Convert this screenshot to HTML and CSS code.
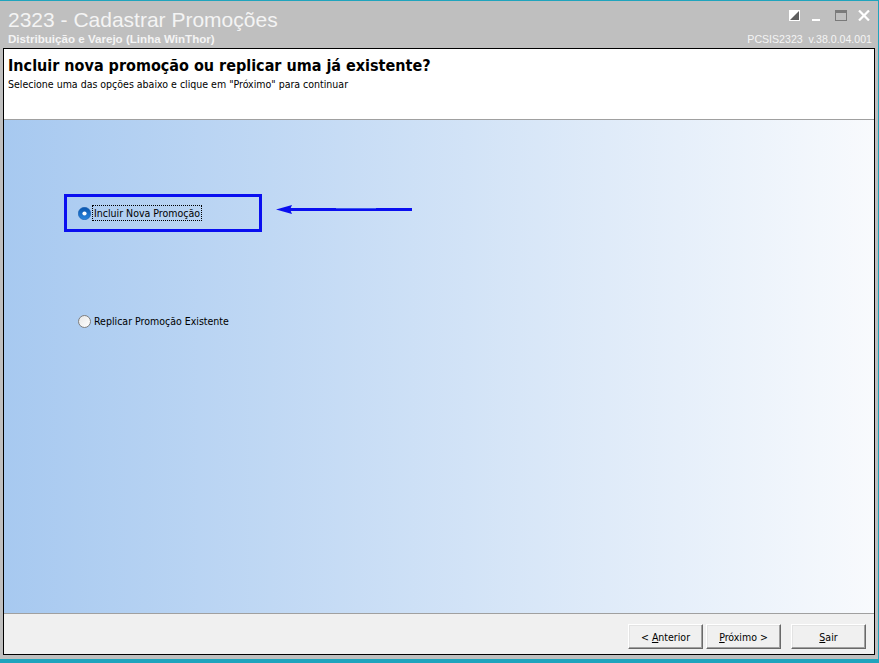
FILE: index.html
```html
<!DOCTYPE html>
<html lang="pt-BR">
<head>
<meta charset="utf-8">
<title>2323 - Cadastrar Promoções</title>
<link rel="stylesheet" href="styles.css">
</head>
<body>
<div class="window">
  <div class="titlebar">
    <div class="tb-row1">
      <div class="app-title">2323 - Cadastrar Promoções</div>
      <div class="controls">
        <svg class="ctl ctl-skin" width="11" height="11" viewBox="0 0 11 11">
          <rect x="0" y="0" width="11" height="11" fill="#ffffff"/>
          <polygon points="10,1 10,10 1,10" fill="#5e5e5e"/>
        </svg>
        <svg class="ctl ctl-min" width="8" height="11" viewBox="0 0 8 11">
          <rect x="0" y="9" width="8" height="2" fill="#ffffff"/>
        </svg>
        <svg class="ctl ctl-max" width="12" height="11" viewBox="0 0 12 11">
          <rect x="0.5" y="0.5" width="11" height="10" fill="none" stroke="#7a7a7a"/>
          <rect x="0" y="0" width="12" height="3" fill="#7a7a7a"/>
        </svg>
        <svg class="ctl ctl-close" width="12" height="11" viewBox="0 0 12 11">
          <path d="M1 0.5 L11 10.5 M11 0.5 L1 10.5" stroke="#ffffff" stroke-width="2.2" fill="none"/>
        </svg>
      </div>
    </div>
    <div class="tb-row2">
      <div class="app-sub">Distribuição e Varejo (Linha WinThor)</div>
      <div class="app-ver">PCSIS2323&nbsp; v.38.0.04.001</div>
    </div>
  </div>

  <div class="panel">
    <div class="header">
      <div class="h-title">Incluir nova promoção ou replicar uma já existente?</div>
      <div class="h-sub">Selecione uma das opções abaixo e clique em "Próximo" para continuar</div>
    </div>

    <div class="body">
      <div class="choices">
        <div class="choice">
          <svg class="radio" width="13" height="13" viewBox="0 0 13 13">
            <defs>
              <linearGradient id="rsel" x1="0" y1="0" x2="0" y2="1">
                <stop offset="0" stop-color="#0b56ae"/>
                <stop offset="1" stop-color="#2a86de"/>
              </linearGradient>
            </defs>
            <circle cx="6.5" cy="6.5" r="6.2" fill="url(#rsel)" stroke="#1b5fb0" stroke-width="0.6"/>
            <circle cx="6.5" cy="6.5" r="2.1" fill="#ffffff"/>
          </svg>
          <span class="choice-label focused">Incluir Nova Promoção</span>
        </div>
        <div class="choice">
          <svg class="radio" width="13" height="13" viewBox="0 0 13 13">
            <defs>
              <linearGradient id="runsel" x1="0" y1="0" x2="1" y2="1">
                <stop offset="0" stop-color="#e6e6e6"/>
                <stop offset="1" stop-color="#ffffff"/>
              </linearGradient>
            </defs>
            <circle cx="6.5" cy="6.5" r="6" fill="url(#runsel)" stroke="#7d7d7d" stroke-width="1"/>
          </svg>
          <span class="choice-label">Replicar Promoção Existente</span>
        </div>
      </div>

      <div class="annot-box"></div>
      <svg class="annot-arrow" width="140" height="14" viewBox="0 0 140 14">
        <polygon points="0,6.5 16,2 14,6.5 16,11" fill="#0a0ff0"/>
        <rect x="14" y="5" width="122" height="3" fill="#0a0ff0"/>
        <rect x="60" y="5" width="40" height="1" fill="#3d55f0"/>
      </svg>
    </div>

    <div class="footer">
      <button class="btn" type="button">&lt; <u>A</u>nterior</button>
      <button class="btn" type="button"><u>P</u>róximo &gt;</button>
      <button class="btn btn-exit" type="button"><u>S</u>air</button>
    </div>
  </div>
</div>
</body>
</html>
```

FILE: styles.css
```css
html, body {
  margin: 0;
  padding: 0;
  background: #bfbfbf;
}

.window {
  width: 879px;
  height: 663px;
  box-sizing: border-box;
  background: #bfbfbf;
  border-top: 1px solid #1fa4bd;
  border-right: 1px solid #1fa4bd;
  border-bottom: 4px solid #1fa4bd;
  display: flex;
  flex-direction: column;
  font-family: "Liberation Sans", Arial, sans-serif;
}

/* ---------- title bar ---------- */
.titlebar {
  height: 47px;
  flex: none;
  box-sizing: border-box;
  padding: 7px 6px 3px 8px;
  color: #f4f4f4;
}

.tb-row1 {
  display: flex;
  justify-content: space-between;
  align-items: flex-start;
  height: 24px;
}

.app-title {
  font-size: 21px;
  line-height: 24px;
  white-space: nowrap;
}

.controls {
  display: flex;
  align-items: flex-start;
  margin-top: 2px;
  margin-right: 2px;
}

.ctl {
  display: block;
  flex: none;
}

.ctl-min { margin-left: 12px; }
.ctl-max { margin-left: 15px; }
.ctl-close { margin-left: 11px; }

.tb-row2 {
  display: flex;
  justify-content: space-between;
  align-items: baseline;
  line-height: 13px;
  white-space: nowrap;
}

.app-sub {
  font-size: 11.6px;
  font-weight: bold;
}

.app-ver {
  font-size: 10.6px;
}

/* ---------- panel ---------- */
.panel {
  flex: 1;
  min-height: 0;
  margin: 0 3px 4px 3px;
  border: 1px solid #000;
  background: #fff;
  display: flex;
  flex-direction: column;
  font-family: "DejaVu Sans Condensed", "DejaVu Sans", sans-serif;
  color: #000;
}

.header {
  height: 71px;
  flex: none;
  box-sizing: border-box;
  border-bottom: 1px solid #a0a0a0;
  padding: 7px 0 0 4px;
  background: #fff;
}

.h-title {
  font-size: 16px;
  font-weight: bold;
  line-height: 20px;
  white-space: nowrap;
}

.h-sub {
  margin-top: 1px;
  font-size: 10.5px;
  line-height: 14px;
  white-space: nowrap;
}

.body {
  flex: 1;
  position: relative;
  background: linear-gradient(to right, #a7c9f0 0%, #f8fafd 100%);
  padding: 85px 0 0 74px;
}

.choice {
  display: flex;
  align-items: center;
  height: 16px;
}

.choice + .choice {
  margin-top: 92px;
}

.radio {
  display: block;
  flex: none;
  width: 13px;
  height: 13px;
}

.choice-label {
  margin-left: 1px;
  border: 1px solid transparent;
  padding: 0 1px;
  font-size: 10.5px;
  line-height: 14px;
  white-space: nowrap;
}

.choice-label.focused {
  border: 1px dotted #000;
}

/* annotation overlay */
.annot-box {
  position: absolute;
  left: 60px;
  top: 74px;
  width: 198px;
  height: 38px;
  box-sizing: border-box;
  border: 3px solid #0a0ff0;
}

.annot-arrow {
  position: absolute;
  left: 272px;
  top: 83px;
  display: block;
}

/* ---------- footer ---------- */
.footer {
  height: 41px;
  flex: none;
  box-sizing: border-box;
  border-top: 1px solid #a0a0a0;
  background: #f0f0f0;
  display: flex;
  justify-content: flex-end;
  align-items: flex-start;
  gap: 3px;
  padding: 10px 8px 0 0;
}

.btn {
  width: 75px;
  height: 25px;
  box-sizing: border-box;
  padding: 0;
  font-family: "DejaVu Sans Condensed", "DejaVu Sans", sans-serif;
  font-size: 10.5px;
  color: #000;
  background: #f0f0f0;
  border: 1px solid;
  border-color: #ffffff #696969 #696969 #ffffff;
  box-shadow: inset -1px -1px 0 #a0a0a0, inset 1px 1px 0 #e3e3e3;
  border-radius: 0;
}

.btn-exit {
  margin-left: 7px;
}
```
